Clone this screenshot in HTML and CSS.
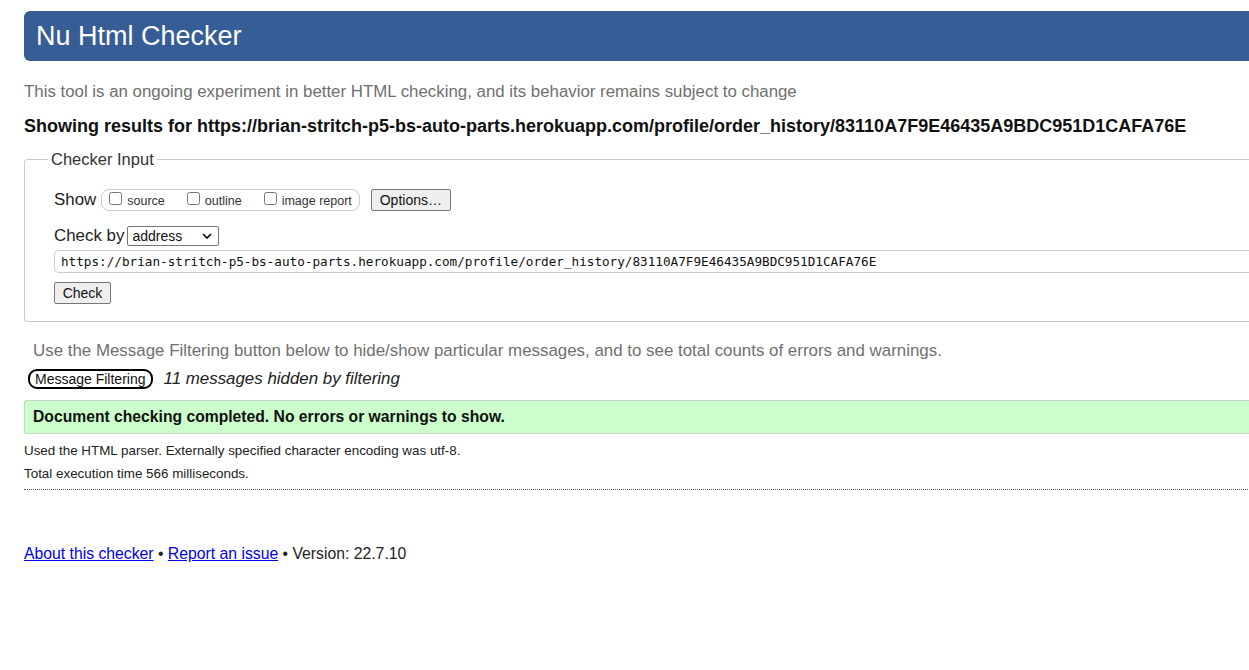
FILE: index.html
```html
<!DOCTYPE html>
<html lang="en">
<head>
<meta charset="utf-8">
<title>Nu Html Checker</title>
<link rel="stylesheet" href="styles.css">
</head>
<body>
<div class="page">
  <h1 class="title">Nu Html Checker</h1>
  <p class="intro">This tool is an ongoing experiment in better HTML checking, and its behavior remains subject to change</p>
  <p class="showing">Showing results for https://brian-stritch-p5-bs-auto-parts.herokuapp.com/profile/order_history/83110A7F9E46435A9BDC951D1CAFA76E</p>

  <fieldset class="input-box">
    <legend class="legend">Checker Input</legend>
    <div class="row row-show">
      <span class="lbl">Show</span>
      <span class="opts">
        <label class="opt"><input type="checkbox" class="cb"> source</label>
        <label class="opt"><input type="checkbox" class="cb"> outline</label>
        <label class="opt"><input type="checkbox" class="cb"> image report</label>
      </span>
      <button class="btn btn-options" type="button">Options…</button>
    </div>
    <div class="row row-by">
      <span class="lbl">Check by</span>
      <span class="select">address<svg class="chev" width="10" height="6" viewBox="0 0 10 6"><path d="M1 1l4 4 4-4" fill="none" stroke="#000" stroke-width="1.6"/></svg></span>
    </div>
    <div class="url">https://brian-stritch-p5-bs-auto-parts.herokuapp.com/profile/order_history/83110A7F9E46435A9BDC951D1CAFA76E</div>
    <div class="row row-check">
      <button class="btn btn-check" type="button">Check</button>
    </div>
  </fieldset>

  <p class="filter-note">Use the Message Filtering button below to hide/show particular messages, and to see total counts of errors and warnings.</p>
  <div class="filter-row">
    <button class="btn-filter" type="button">Message Filtering</button>
    <span class="hidden-count">11 messages hidden by filtering</span>
  </div>
  <div class="success">Document checking completed. No errors or warnings to show.</div>
  <p class="meta">Used the HTML parser. Externally specified character encoding was utf-8.</p>
  <p class="meta meta-last">Total execution time 566 milliseconds.</p>

  <p class="footer"><a href="#">About this checker</a> • <a href="#">Report an issue</a> • Version: 22.7.10</p>
</div>
</body>
</html>
```

FILE: styles.css
```css
html {
  overflow: hidden;
}
body {
  margin: 0;
  background: #fff;
  font-family: "Liberation Sans", Arial, sans-serif;
  color: #222;
}
.page {
  width: 1300px;
  padding: 11px 0 0 24px;
}
.title {
  margin: 0;
  height: 50px;
  box-sizing: border-box;
  background: #365d95;
  color: #fff;
  font-weight: normal;
  font-size: 27px;
  line-height: 50px;
  padding-left: 12px;
  border-radius: 6px 0 0 6px;
}
.intro {
  margin: 20px 0 0;
  font-size: 16.85px;
  line-height: 22px;
  color: #707070;
}
.showing {
  margin: 12px 0 0;
  font-size: 18px;
  line-height: 22px;
  font-weight: bold;
  color: #111;
}
.input-box {
  margin: 13px 0 0;
  padding: 10px 0 17px 29px;
  border: 1px solid #ccc;
  border-right: none;
  border-radius: 4px 0 0 4px;
}
.legend {
  margin-left: -6px;
  padding: 0 3px;
  font-size: 16.5px;
  color: #333;
}
.row {
  display: flex;
  align-items: center;
}
.lbl {
  font-size: 16.9px;
  color: #222;
}
.row-show {
  margin-top: 10px;
  height: 22px;
}
.opts {
  margin-left: 5px;
  height: 20px;
  display: flex;
  align-items: center;
  gap: 22px;
  padding: 0 7px 0 7px;
  border: 1px solid #ccc;
  border-radius: 8px;
}
.opt {
  font-size: 12.5px;
  color: #333;
  display: flex;
  align-items: center;
  gap: 5px;
  padding-top: 2px;
}
.cb {
  margin: 0;
  width: 13px;
  height: 13px;
  position: relative;
  top: -3px;
}
.btn {
  font-family: "Liberation Sans", Arial, sans-serif;
  background: #efefef;
  border: 1px solid #767676;
  border-radius: 2px;
  color: #111;
  padding: 0 6px;
}
.btn-options {
  margin-left: 11px;
  height: 22px;
  font-size: 14px;
  width: 80px;
}
.row-by {
  margin-top: 15px;
  height: 20px;
}
.select {
  margin-left: 3px;
  width: 92px;
  height: 20px;
  box-sizing: border-box;
  border: 1px solid #767676;
  border-radius: 2px;
  font-size: 14px;
  padding: 0 6px 0 4px;
  display: flex;
  align-items: center;
  justify-content: space-between;
  color: #111;
}
.url {
  margin-top: 4px;
  height: 23px;
  box-sizing: border-box;
  border: 1px solid #ccc;
  border-right: none;
  border-radius: 5px 0 0 5px;
  font-family: "DejaVu Sans Mono", "Liberation Mono", monospace;
  font-size: 12.66px;
  line-height: 21px;
  padding-left: 6px;
  color: #111;
}
.row-check {
  margin-top: 9px;
}
.btn-check {
  height: 22px;
  font-size: 14px;
  width: 57px;
}
.filter-note {
  margin: 18px 0 0 9px;
  font-size: 16.9px;
  line-height: 22px;
  color: #707070;
}
.filter-row {
  margin-top: 7px;
  display: flex;
  align-items: center;
  height: 20px;
}
.btn-filter {
  margin-left: 4px;
  height: 20px;
  padding: 0 5px;
  border: 2px solid #000;
  border-radius: 9px;
  background: #fff;
  font-family: "Liberation Sans", Arial, sans-serif;
  font-size: 14px;
  color: #111;
}
.hidden-count {
  margin-left: 11px;
  font-style: italic;
  font-size: 16.9px;
  color: #222;
}
.success {
  margin-top: 11px;
  height: 34px;
  box-sizing: border-box;
  background: #ccffcc;
  border: 1px solid #c3d6c3;
  border-right: none;
  border-radius: 3px 0 0 3px;
  padding-left: 8px;
  font-weight: bold;
  font-size: 15.7px;
  line-height: 31px;
  color: #111;
}
.meta {
  margin: 9px 0 0;
  font-size: 13.4px;
  line-height: 16px;
  color: #222;
}
.meta-last {
  margin-top: 7px;
  padding-bottom: 7px;
  border-bottom: 1px dotted #555;
}
.footer {
  margin: 53px 0 0;
  font-size: 15.75px;
  line-height: 22px;
  color: #222;
}
.footer a {
  color: #0000ee;
}
```
